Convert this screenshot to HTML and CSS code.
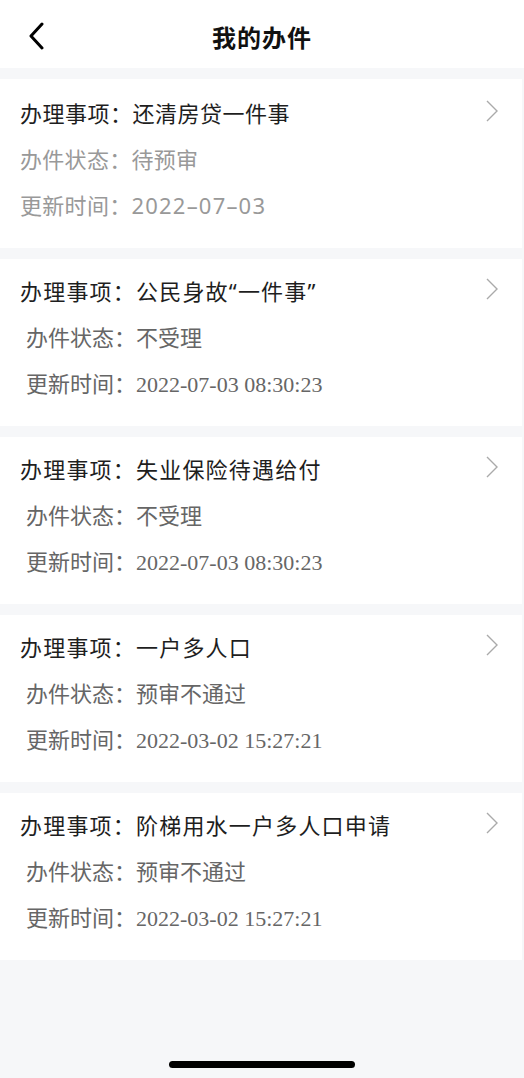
FILE: index.html
```html
<!DOCTYPE html>
<html lang="zh-CN">

<head>
    <meta charset="UTF-8">
    <meta name="viewport" content="width=device-width, initial-scale=1.0">
    <title>我的办件</title>
    <link rel="stylesheet" href="styles.css">
</head>

<body>
    <div class="page">
        <header class="nav">
            <svg class="back" width="18" height="28" viewBox="0 0 18 28">
                <path d="M15 2 L4 14 L15 26" fill="none" stroke="#000" stroke-width="3" stroke-linecap="round" stroke-linejoin="round" />
            </svg>
            <h1 class="nav-title">我的办件</h1>
        </header>

        <main class="list">
            <div class="card card-first">
                <div class="row row-title">
                    <span>办理事项：还清房贷一件事</span>
                    <svg class="arrow" width="12" height="22" viewBox="0 0 12 22">
                        <path d="M1 1 L11 11 L1 21" fill="none" stroke="#aaa" stroke-width="1.4" />
                    </svg>
                </div>
                <div class="row row-sub">办件状态：待预审</div>
                <div class="row row-sub">更新时间：<span class="day">2022–07–03</span></div>
            </div>

            <div class="card">
                <div class="row row-title">
                    <span>办理事项：公民身故“一件事”</span>
                    <svg class="arrow" width="12" height="22" viewBox="0 0 12 22">
                        <path d="M1 1 L11 11 L1 21" fill="none" stroke="#aaa" stroke-width="1.4" />
                    </svg>
                </div>
                <div class="row row-sub">办件状态：不受理</div>
                <div class="row row-sub">更新时间：<span class="date">2022-07-03 08:30:23</span></div>
            </div>

            <div class="card">
                <div class="row row-title">
                    <span>办理事项：失业保险待遇给付</span>
                    <svg class="arrow" width="12" height="22" viewBox="0 0 12 22">
                        <path d="M1 1 L11 11 L1 21" fill="none" stroke="#aaa" stroke-width="1.4" />
                    </svg>
                </div>
                <div class="row row-sub">办件状态：不受理</div>
                <div class="row row-sub">更新时间：<span class="date">2022-07-03 08:30:23</span></div>
            </div>

            <div class="card">
                <div class="row row-title">
                    <span>办理事项：一户多人口</span>
                    <svg class="arrow" width="12" height="22" viewBox="0 0 12 22">
                        <path d="M1 1 L11 11 L1 21" fill="none" stroke="#aaa" stroke-width="1.4" />
                    </svg>
                </div>
                <div class="row row-sub">办件状态：预审不通过</div>
                <div class="row row-sub">更新时间：<span class="date">2022-03-02 15:27:21</span></div>
            </div>

            <div class="card">
                <div class="row row-title">
                    <span>办理事项：阶梯用水一户多人口申请</span>
                    <svg class="arrow" width="12" height="22" viewBox="0 0 12 22">
                        <path d="M1 1 L11 11 L1 21" fill="none" stroke="#aaa" stroke-width="1.4" />
                    </svg>
                </div>
                <div class="row row-sub">办件状态：预审不通过</div>
                <div class="row row-sub">更新时间：<span class="date">2022-03-02 15:27:21</span></div>
            </div>
        </main>

        <div class="home-bar"></div>
    </div>
</body>

</html>
```

FILE: styles.css
```css
body {
    margin: 0;
    font-family: "Noto Sans", "Noto Sans CJK SC", sans-serif;
    background-color: #f6f7f9;
}

.page {
    display: flex;
    flex-direction: column;
    height: 1078px;
}

.nav {
    display: flex;
    align-items: center;
    height: 68px;
    padding: 4px 0 0 27px;
    box-sizing: border-box;
    background: white;
}

.back {
    display: block;
}

.nav-title {
    margin: 0 0 0 167px;
    font-size: 24px;
    font-weight: bold;
    color: #111;
    letter-spacing: 1px;
}

.list {
    flex: 1;
    display: flex;
    flex-direction: column;
    gap: 11px;
    padding: 11px 2px 0 0;
}

.card {
    background: white;
    padding: 9px 24px 20px 20px;
}

.row {
    height: 46px;
    line-height: 46px;
    font-size: 22px;
    white-space: nowrap;
}

.row-title {
    display: flex;
    justify-content: space-between;
    align-items: center;
    color: #1e1e1e;
    letter-spacing: 1.2px;
}

.row-sub {
    padding-left: 6px;
    color: #666;
}

.card-first .row-title {
    letter-spacing: 0.5px;
    margin-top: 2px;
}

.card-first .row-sub {
    padding-left: 0;
    color: #999;
    letter-spacing: 0.3px;
}

.day {
    letter-spacing: 1.2px;
}

.date {
    font-family: "Liberation Serif", serif;
    letter-spacing: 0;
}

.arrow {
    display: block;
    margin-top: -4px;
}

.home-bar {
    width: 186px;
    height: 7px;
    margin: 0 auto 10px;
    border-radius: 4px;
    background: #000;
}
```
